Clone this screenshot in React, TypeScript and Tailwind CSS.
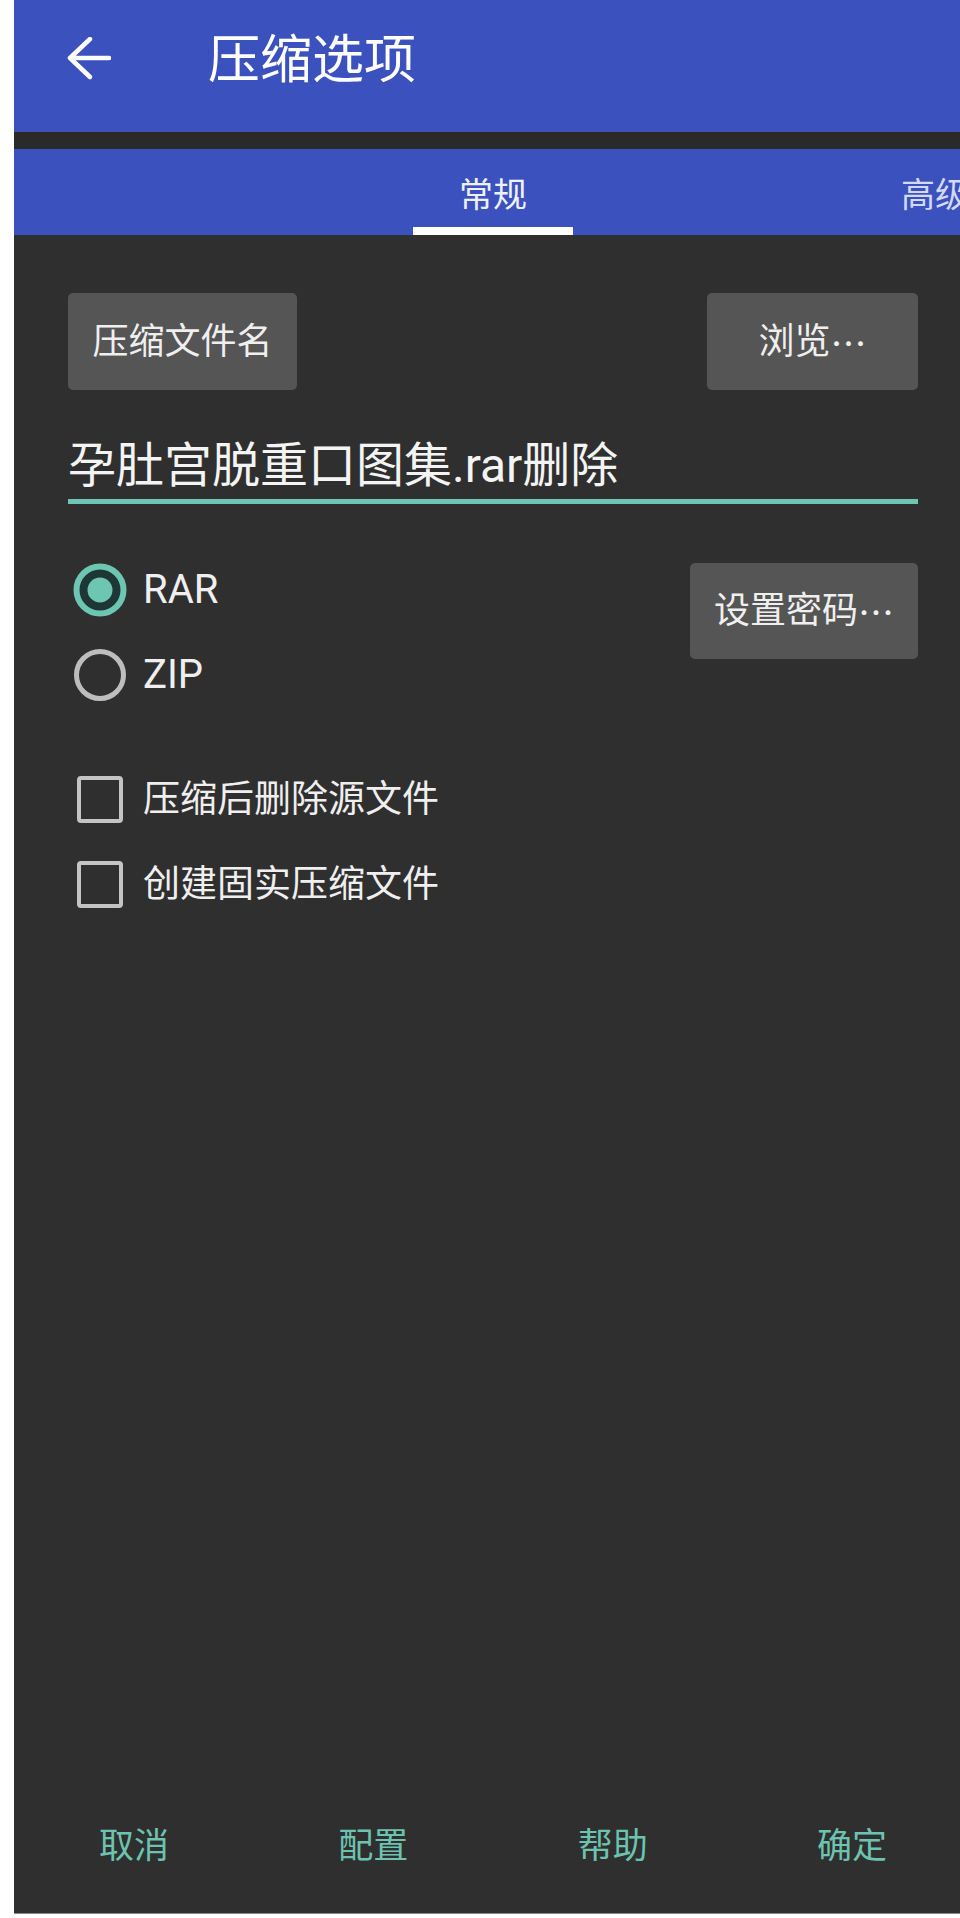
import React from "react";

const TEAL = "#6cc6b2";

function BackArrow() {
  return (
    <svg width="44" height="44" viewBox="0 0 44 44" className="shrink-0">
      <path
        d="M3 21 H42 M3 21 L23 2 M3 21 L23 40"
        stroke="white"
        strokeWidth="4.5"
        strokeLinecap="round"
        strokeLinejoin="round"
        fill="none"
      />
    </svg>
  );
}

function Ellipsis() {
  return <span style={{ fontFamily: '"Noto Sans CJK SC", sans-serif' }}>…</span>;
}

function Radio({ checked }: { checked: boolean }) {
  return (
    <svg width="54" height="54" viewBox="0 0 54 54" className="shrink-0">
      {checked ? (
        <>
          <circle cx="27" cy="27" r="23.5" fill="#1e3634" stroke={TEAL} strokeWidth="6" />
          <circle cx="27" cy="27" r="12.5" fill={TEAL} />
        </>
      ) : (
        <circle cx="27" cy="27" r="23.5" fill="none" stroke="#bdbdbd" strokeWidth="5" />
      )}
    </svg>
  );
}

export default function App() {
  return (
    <div
      className="w-[960px] min-h-[1918px] bg-white pl-[14px] pb-[4px] flex flex-col"
      style={{ fontFamily: 'Roboto, "Noto Sans CJK SC", sans-serif' }}
    >
      <div className="flex-1 flex flex-col bg-[#2f2f2f] border-b border-[#8a8a8a]">
        {/* App bar */}
        <div className="h-[132px] bg-[#3b51bd] flex items-start pt-[37px] pl-[53px]">
          <BackArrow />
          <div className="ml-[97px] -mt-[2px] text-[52px] leading-[52px] text-white">压缩选项</div>
        </div>
        <div className="h-[17px] bg-[#2a2a2a]" />
        {/* Tabs */}
        <div className="h-[86px] bg-[#3b51bd] flex overflow-hidden">
          <div className="w-[399px] shrink-0" />
          <div className="w-[160px] shrink-0 flex flex-col items-center">
            <div className="pt-[29px] text-[34px] leading-[34px] text-[#eef0ff]">常规</div>
            <div className="mt-auto h-[8px] w-full bg-white" />
          </div>
          <div className="ml-[328px] shrink-0 whitespace-nowrap pt-[29px] text-[34px] leading-[34px] text-[#d3d9f5]">
            高级
          </div>
        </div>
        {/* Body */}
        <div className="flex-1 flex flex-col pl-[54px] pr-[42px] pt-[58px] text-[#efefef]">
          <div className="flex justify-between">
            <div className="w-[229px] h-[97px] rounded-[5px] bg-[#555555] flex items-center justify-center text-[36px] leading-none">
              压缩文件名
            </div>
            <div className="w-[211px] h-[97px] rounded-[5px] bg-[#555555] flex items-center justify-center text-[36px] leading-none">
              浏览<Ellipsis />
            </div>
          </div>
          <div className="mt-[48px] h-[66px] border-b-[5px] border-[#6cc6b2] text-[48px] leading-[56px] text-[#f4f4f4] whitespace-nowrap">
            孕肚宫脱重口图集.rar删除
          </div>
          <div className="mt-[43px] flex justify-between items-start">
            <div className="flex flex-col">
              <div className="h-[85px] flex items-center pl-[5px]">
                <Radio checked />
                <span className="ml-[16px] text-[40px] leading-none">RAR</span>
              </div>
              <div className="h-[85px] flex items-center pl-[5px]">
                <Radio checked={false} />
                <span className="ml-[16px] text-[40px] leading-none">ZIP</span>
              </div>
            </div>
            <div className="mt-[16px] w-[228px] h-[96px] rounded-[5px] bg-[#555555] flex items-center justify-center text-[36px] leading-none">
              设置密码<Ellipsis />
            </div>
          </div>
          <div className="mt-[40px] flex flex-col">
            {["压缩后删除源文件", "创建固实压缩文件"].map((t) => (
              <div key={t} className="h-[85px] flex items-center pl-[9px]">
                <div className="w-[46px] h-[47px] shrink-0 rounded-[4px] border-[4px] border-[#c4c4c4]" />
                <span className="ml-[20px] text-[37px] leading-none">{t}</span>
              </div>
            ))}
          </div>
          <div className="mt-auto mb-[17px] h-[100px] flex items-center justify-between pl-[31px] pr-[31px] text-[35px] leading-none text-[#6cc4b0]">
            <span>取消</span>
            <span>配置</span>
            <span>帮助</span>
            <span>确定</span>
          </div>
        </div>
      </div>
    </div>
  );
}
